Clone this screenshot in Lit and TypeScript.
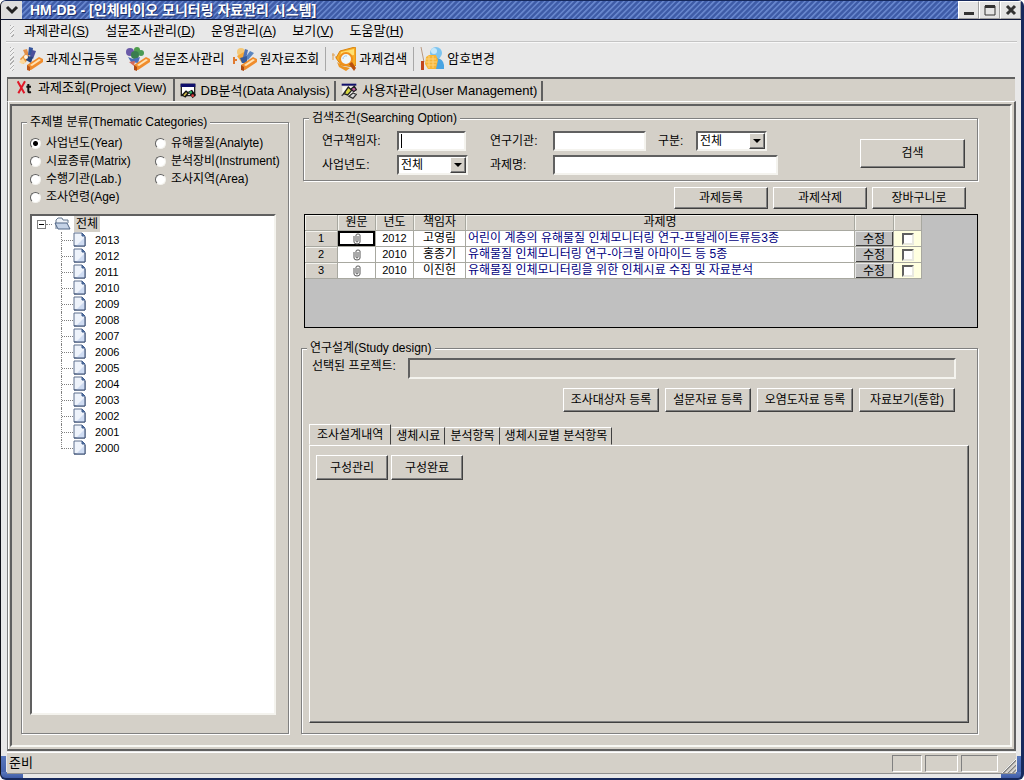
import { LitElement, html, svg, css } from "lit";
import { customElement, property, state } from "lit/decorators.js";
import { classMap } from "lit/directives/class-map.js";

const icons: Record<string, unknown> = {
  create: svg`
    <path d="M1 12 L6 7 L9 13 L4 17 Z" fill="#e9963a"/><path d="M0 15 L4 11 L7 16 L3 17 Z" fill="#fbd79b"/>
    <path d="M4 3 L8 2 L11 12 L8 12 Z" fill="#e2904a"/><path d="M10 0 L14 1 L13 9 L9 8 Z" fill="#35549c"/>
    <path d="M13 3 L17 4 L14 12 L11 10 Z" fill="#4a4f9c"/><path d="M8 9 L14 10 L12 16 L7 13 Z" fill="#27457e"/>
    <circle cx="7" cy="10" r="2" fill="#fff4e0"/>
    <path d="M8 18 L20 10 L24 12 L24 15 L12 23 L9 23 Z" fill="#f08c2c"/>
    <path d="M11 18 L20 12 L22 13 L13 19 Z" fill="#ffe2b4"/><path d="M8 18 L11 20 L11 24 L8 23 Z" fill="#c05818"/>`,
  survey: svg`
    <circle cx="11" cy="3" r="3" fill="#4f9d4c"/><circle cx="4" cy="5" r="4" fill="#6a5aa8"/>
    <circle cx="15" cy="6" r="3" fill="#4a9a55"/><circle cx="9" cy="8" r="4" fill="#3a7d4e"/>
    <path d="M2 10 L7 12 L14 10 L12 16 L5 15 Z" fill="#4c6fb8"/><path d="M3 15 L9 14 L8 19 Z" fill="#d46a5a"/>
    <path d="M8 18 L20 10 L24 12 L24 15 L12 23 L9 23 Z" fill="#f08c2c"/>
    <path d="M11 18 L20 12 L22 13 L13 19 Z" fill="#ffe2b4"/><path d="M8 18 L11 20 L11 24 L8 23 Z" fill="#b04c14"/>`,
  source: svg`
    <path d="M0 13 H4 M1 10 V17" stroke="#e07b30" stroke-width="2"/><circle cx="8" cy="5" r="4" fill="#f4c878"/>
    <path d="M4 9 L11 5 L14 12 L9 16 Z" fill="#f7a838"/><path d="M12 2 L15 3 L13 12 L10 10 Z" fill="#4e73b6"/>
    <path d="M17 4 L21 6 L15 13 L12 11 Z" fill="#5b86c0"/><path d="M7 11 L14 9 L14 16 L9 16 Z" fill="#365b9c"/>
    <path d="M8 18 L20 10 L24 12 L24 15 L12 23 L9 23 Z" fill="#f08c2c"/>
    <path d="M11 18 L20 12 L22 13 L13 19 Z" fill="#ffe2b4"/><path d="M8 18 L11 20 L11 24 L8 23 Z" fill="#b04c14"/>`,
  search: svg`
    <path d="M0 8 H3 M1 6 V13 M3 10 H5" stroke="#e0a050"/>
    <path d="M8 4 L23 0 L24 2 L24 18 L22 20 L9 18 L4 11 Z" fill="#f8ac24" stroke="#d98410"/>
    <path d="M9 5 L22 2 L22 8 L8 10 Z" fill="#ffe070"/>
    <circle cx="14" cy="12" r="6" fill="#eef6fb" stroke="#f0901c" stroke-width="2"/>
    <path d="M11 12 A3 3 0 0 1 15 9" stroke="#9cc4e4" stroke-width="1" fill="none"/>
    <path d="M17 17 L20 15 L24 21 L22 24 Z" fill="#b8500e"/><path d="M5 15 L10 19 L18 21 L14 24 L7 20 Z" fill="#ec9420"/>`,
  password: svg`
    <path d="M1 0 L4 15" stroke="#b89880"/><path d="M1 14 L4 14 L4 23 L1 23 Z" fill="#c2461c"/>
    <circle cx="16" cy="6" r="6" fill="#7cc4f0"/><path d="M8 22 Q9 11 17 11 Q25 12 24 22 Z" fill="#49a4e2"/>
    <circle cx="14" cy="4" r="3" fill="#c5e8fb"/>
    <path d="M6 10 L9 8 L16 8 L18 13 L16 22 L8 22 L5 17 Z" fill="#f7b536"/>
    <path d="M6 12 H16 M6 15 H17 M7 18 H16 M9 9 V21 M13 9 V21" stroke="#fbd27c"/>`,
  project: svg`
    <path d="M1 2 L11 20 M12 2 L2 20" stroke="#e01828" stroke-width="3"/>
    <path d="M17 6 V17 Q17 19 21 18 M14 10 H21" stroke="#111" stroke-width="3" fill="none"/>`,
  analysis: svg`
    <path d="M2 2 H22 V19 H2 Z" fill="#fff" stroke="#222" stroke-width="2"/><path d="M1 1 H23 V6 H1 Z" fill="#10106c"/>
    <path d="M2 18 L9 11 L14 15 L8 22 Z" fill="#111"/><path d="M5 18 L9 14 L11 15 L7 20 Z" fill="#ccb84c"/>
    <path d="M12 13 L18 10 L24 18 L19 23 Z" fill="#111"/><circle cx="16" cy="14" r="2" fill="#2ab060"/>
    <circle cx="19" cy="19" r="2" fill="#e04040"/>`,
  users: svg`
    <path d="M1 4 V1 H23 V4 Z" fill="#10106c"/><path d="M2 5 H22 V18 H2 Z" fill="#f6f6f0"/>
    <path d="M4 16 L11 6 L16 11 L10 18 Z" fill="#d8d840" stroke="#222" stroke-width="2"/>
    <path d="M15 9 L20 5 L23 10 L19 13 Z" fill="#c05aa0" stroke="#222" stroke-width="2"/>
    <path d="M1 19 L7 14 M12 20 L18 15 L23 17 L18 23 Z" fill="#ddd" stroke="#333" stroke-width="2"/>`,
};

const icon = (name: string) =>
  html`<svg class="icon" viewBox="0 0 24 24" aria-hidden="true">${icons[name]}</svg>`;

const sheet = svg`
  <path d="M1 1 H9 L12 4 V14 H1 Z" fill="#eef3fb" stroke="#5d6f8c"/>
  <path d="M12 5 V14 H3 Z" fill="#cfdcf2"/><path d="M9 1 V4 H12 Z" fill="#5d7cab" stroke="#3f5c8e"/>
  <path d="M12 5 V14 H1" fill="none" stroke="#34496e"/>`;

const folder = svg`
  <path d="M2 13 V4 L4 2 H8 L9 4 H14 V7" fill="#eef2f8" stroke="#66788f"/>
  <path d="M1 7 H13 L16 13 H4 Z" fill="#c4d2e6" stroke="#4f6485"/>`;

const menus = [
  ["과제관리", "S"],
  ["설문조사관리", "D"],
  ["운영관리", "A"],
  ["보기", "V"],
  ["도움말", "H"],
];

const tools = [
  { icon: "create", text: "과제신규등록" },
  { icon: "survey", text: "설문조사관리" },
  { icon: "source", text: "원자료조회" },
  { icon: "search", text: "과제검색", divided: true },
  { icon: "password", text: "암호변경", divided: true },
];

const views = [
  { icon: "project", text: "과제조회(Project View)" },
  { icon: "analysis", text: "DB분석(Data Analysis)" },
  { icon: "users", text: "사용자관리(User Management)" },
];

const categories = [
  "사업년도(Year)",
  "유해물질(Analyte)",
  "시료종류(Matrix)",
  "분석장비(Instrument)",
  "수행기관(Lab.)",
  "조사지역(Area)",
  "조사연령(Age)",
];

const years = Array.from({ length: 14 }, (_, i) => 2013 - i);

const projects = [
  { year: 2012, lead: "고영림", title: "어린이 계층의 유해물질 인체모니터링 연구-프탈레이트류등3종" },
  { year: 2010, lead: "홍종기", title: "유해물질 인체모니터링 연구-아크릴 아마이드 등 5종" },
  { year: 2010, lead: "이진헌", title: "유해물질 인체모니터링을 위한 인체시료 수집 및 자료분석" },
];

const actions = [
  { text: "조사대상자 등록" },
  { text: "설문자료 등록", short: true },
  { text: "오염도자료 등록" },
  { text: "자료보기(통합)" },
];

const designTabs = ["조사설계내역", "생체시료", "분석항목", "생체시료별 분석항목"];

const base = css`
  *,
  *::before,
  *::after {
    box-sizing: border-box;
  }
  button,
  input,
  select {
    font: inherit;
    color: inherit;
    margin: 0;
    border-radius: 0;
    outline: none;
  }
  button {
    padding: 0;
    white-space: nowrap;
  }
  fieldset {
    min-width: 0;
    margin: 0;
    border: 1px solid #808080;
    box-shadow: inset 1px 1px 0 #fff, 1px 1px 0 #fff;
  }
  legend {
    height: 16px;
    line-height: 16px;
    padding: 0 3px;
    background: #d4d0c8;
  }
  .push {
    background: #d4d0c8;
    border: 1px solid;
    border-color: #fff #404040 #404040 #fff;
    box-shadow: inset -1px -1px 0 #808080;
  }
  .field {
    height: 20px;
    padding: 0 3px;
    background: #fff;
    border: 2px solid;
    border-color: #606060 #f4f3ee #f4f3ee #606060;
  }
`;

@customElement("category-panel")
export class CategoryPanel extends LitElement {
  @state() private selected = 0;

  static styles = [
    base,
    css`
      :host {
        display: flex;
      }
      .group {
        flex: 1;
        display: flex;
        flex-direction: column;
        padding: 4px 12px 18px 8px;
      }
      .legend {
        margin-left: -3px;
      }
      .options {
        display: grid;
        grid-template-columns: 125px 1fr;
        grid-auto-rows: 18px;
      }
      .option {
        display: flex;
        align-items: center;
        gap: 5px;
        white-space: nowrap;
      }
      .radio {
        appearance: none;
        flex: none;
        width: 11px;
        height: 11px;
        border: 1px solid;
        border-color: #606060 #f4f3ee #f4f3ee #606060;
        border-radius: 50%;
        background: #fff;
      }
      .radio:checked {
        background: radial-gradient(circle, #000 2px, #fff 3px);
      }
      .tree {
        flex: 1;
        margin: 8px 0 0;
        padding: 0 0 0 5px;
        list-style: none;
        background: #fff;
        border: 2px solid;
        border-color: #606060 #f4f3ee #f4f3ee #606060;
      }
      .node {
        display: flex;
        align-items: center;
        height: 16px;
      }
      .toggle {
        width: 9px;
        height: 9px;
        border: 1px solid #808080;
        background: linear-gradient(#000, #000) center / 5px 1px no-repeat #fff;
      }
      .dash {
        width: 6px;
        border-top: 1px dotted #808080;
      }
      .folder {
        width: 18px;
        height: 16px;
        margin: 0 2px;
      }
      .root-name {
        padding: 0 2px;
        line-height: 16px;
        background: #d4d0c8;
      }
      .years {
        margin: 0;
        padding: 0 0 0 24px;
        list-style: none;
      }
      .year {
        display: flex;
        align-items: center;
        height: 16px;
        font-size: 11px;
      }
      .branch {
        align-self: stretch;
        width: 12px;
        border-left: 1px dotted #808080;
        background: repeating-linear-gradient(90deg, #808080 0 1px, #fff 1px 2px) 0 8px / 12px 1px no-repeat;
      }
      .year:last-child .branch {
        height: 9px;
        align-self: flex-start;
      }
      .sheet {
        width: 14px;
        height: 16px;
        margin-right: 8px;
      }
    `,
  ];

  render() {
    return html`<fieldset class="group">
      <legend class="legend">주제별 분류(Thematic Categories)</legend>
      <div class="options">
        ${categories.map(
          (name, i) => html`<label class="option"
            ><input
              class="radio"
              type="radio"
              name="category"
              .checked=${i === this.selected}
              @change=${() => (this.selected = i)}
            />${name}</label
          >`
        )}
      </div>
      <ul class="tree">
        <li>
          <div class="node">
            <span class="toggle"></span><span class="dash"></span>
            <svg class="folder" viewBox="0 0 18 16" aria-hidden="true">${folder}</svg>
            <span class="root-name">전체</span>
          </div>
          <ul class="years">
            ${years.map(
              (year) => html`<li class="year">
                <span class="branch"></span>
                <svg class="sheet" viewBox="0 0 14 16" aria-hidden="true">${sheet}</svg>${year}
              </li>`
            )}
          </ul>
        </li>
      </ul>
    </fieldset>`;
  }
}

@customElement("search-panel")
export class SearchPanel extends LitElement {
  static styles = [
    base,
    css`
      :host {
        display: block;
      }
      .group {
        display: flex;
        align-items: center;
        justify-content: space-between;
        padding: 5px 12px 5px 18px;
      }
      .legend {
        margin-left: -13px;
      }
      .form {
        display: grid;
        grid-template-columns: 75px 93px 63px 105px 38px 81px;
        grid-auto-rows: 20px;
        row-gap: 4px;
        align-items: center;
      }
      .lead {
        width: 69px;
        background: linear-gradient(#000, #000) 2px 1px / 1px 14px no-repeat #fff;
      }
      .lab {
        width: 93px;
      }
      .title {
        grid-column: span 3;
        width: 225px;
      }
      .choice {
        display: grid;
        width: 71px;
        align-items: center;
      }
      .select {
        grid-area: 1 / 1;
        appearance: none;
        width: 100%;
        padding: 0 2px;
        line-height: 16px;
      }
      .arrow {
        grid-area: 1 / 1;
        justify-self: end;
        display: grid;
        place-items: center;
        width: 16px;
        height: 16px;
        margin-right: 2px;
        pointer-events: none;
      }
      .arrow::after {
        content: "";
        border: 4px solid transparent;
        border-top-color: #000;
        border-bottom: 0;
      }
      .submit {
        width: 105px;
        height: 29px;
      }
    `,
  ];

  private choice(id: string) {
    return html`<span class="choice"
      ><select class="field select" id=${id}>
        <option>전체</option></select
      ><span class="push arrow"></span
    ></span>`;
  }

  render() {
    return html`<fieldset class="group">
      <legend class="legend">검색조건(Searching Option)</legend>
      <div class="form">
        <label for="lead">연구책임자:</label><input class="field lead" id="lead" />
        <label for="lab">연구기관:</label><input class="field lab" id="lab" />
        <label for="kind">구분:</label>${this.choice("kind")}
        <label for="year">사업년도:</label>${this.choice("year")}
        <label for="title">과제명:</label><input class="field title" id="title" />
      </div>
      <button class="push submit">검색</button>
    </fieldset>`;
  }
}

@customElement("project-grid")
export class ProjectGrid extends LitElement {
  static styles = [
    base,
    css`
      :host {
        display: block;
        height: 114px;
        overflow: hidden;
        background: #c0c0c0;
        border: 1px solid #000;
      }
      .table {
        border-collapse: separate;
        border-spacing: 0;
        table-layout: fixed;
        width: 617px;
        line-height: 15px;
      }
      .number {
        width: 33px;
      }
      .file {
        width: 38px;
      }
      .year {
        width: 38px;
      }
      .lead {
        width: 52px;
      }
      .edit {
        width: 39px;
      }
      .pick {
        width: 28px;
      }
      th,
      td {
        height: 16px;
        padding: 0;
        text-align: center;
        font-weight: 400;
        white-space: nowrap;
        overflow: hidden;
        border-right: 1px solid #a8a8a0;
        border-bottom: 1px solid #a8a8a0;
      }
      th {
        background: #d4d0c8;
        box-shadow: inset 1px 1px 0 #f4f3ee;
      }
      td {
        background: #fff;
      }
      tbody th,
      .when {
        font-size: 11px;
      }
      .current {
        box-shadow: inset 0 0 0 2px #000;
      }
      .clip {
        display: block;
        width: 8px;
        height: 12px;
        margin: 0 auto;
      }
      .name {
        padding-left: 2px;
        text-align: left;
        color: #000080;
      }
      .action {
        background: #c0c0c0;
      }
      .modify {
        display: block;
        width: 100%;
        height: 15px;
        line-height: 14px;
        background: #c0c0c0;
        border: 0;
        box-shadow: inset 1px 1px 0 #e8e8e8, inset -1px -1px 0 #404040;
      }
      .mark {
        background: #ffffe0;
      }
      .tick {
        appearance: none;
        display: block;
        width: 12px;
        height: 12px;
        margin: 0 auto;
        background: #fff;
        border: 2px solid;
        border-color: #606060 #e8e8e0 #e8e8e0 #606060;
      }
      .tick:checked {
        background: #404040;
      }
    `,
  ];

  render() {
    return html`<table class="table">
      <colgroup>
        <col class="number" />
        <col class="file" />
        <col class="year" />
        <col class="lead" />
        <col />
        <col class="edit" />
        <col class="pick" />
      </colgroup>
      <thead>
        <tr>
          <th></th>
          <th>원문</th>
          <th>년도</th>
          <th>책임자</th>
          <th>과제명</th>
          <th></th>
          <th></th>
        </tr>
      </thead>
      <tbody>
        ${projects.map(
          (p, i) => html`<tr>
            <th>${i + 1}</th>
            <td class=${classMap({ current: i === 0 })}>
              <svg class="clip" viewBox="0 0 8 12" aria-hidden="true">
                <path
                  d="M1 3 V9 Q1 11 4 11 Q7 11 7 9 V2 Q7 1 5 1 Q3 1 3 2 V8 Q3 9 4 9 Q5 9 5 8 V3"
                  fill="none"
                  stroke="#555"
                />
              </svg>
            </td>
            <td class="when">${p.year}</td>
            <td>${p.lead}</td>
            <td class="name">${p.title}</td>
            <td class="action"><button class="modify">수정</button></td>
            <td class="mark"><input class="tick" type="checkbox" aria-label=${p.title} /></td>
          </tr>`
        )}
      </tbody>
    </table>`;
  }
}

@customElement("study-panel")
export class StudyPanel extends LitElement {
  @state() private tab = 0;

  static styles = [
    base,
    css`
      :host {
        display: flex;
      }
      .group {
        flex: 1;
        display: flex;
        flex-direction: column;
        padding: 2px 8px 10px 7px;
      }
      .legend {
        margin-left: -2px;
      }
      .chosen {
        display: flex;
        justify-content: space-between;
        margin: 0 13px 0 3px;
      }
      .chosen-label {
        flex: none;
        width: 96px;
        line-height: 16px;
      }
      .target {
        flex: 1;
        min-width: 0;
        height: 21px;
        background: #d4d0c8;
      }
      .actions {
        display: flex;
        justify-content: flex-end;
        gap: 6px;
        margin: 9px 14px 0 0;
      }
      .action {
        width: 96px;
        height: 24px;
      }
      .action.short {
        width: 86px;
      }
      .tabs {
        display: flex;
        align-items: flex-end;
        height: 21px;
        margin-top: 12px;
      }
      .tab {
        height: 18px;
        padding: 0 4px;
        background: none;
        border: 1px solid;
        border-color: #fff #404040 transparent transparent;
      }
      .tab.on {
        height: 21px;
        padding: 0 7px;
        border-color: #fff #404040 transparent #fff;
      }
      .sheet {
        flex: 1;
        display: flex;
        align-items: flex-start;
        gap: 3px;
        padding: 9px 6px;
        border: 1px solid;
        border-color: #fff #404040 #404040 #fff;
        box-shadow: inset -1px -1px 0 #808080;
      }
      .step {
        width: 72px;
        height: 25px;
      }
    `,
  ];

  render() {
    return html`<fieldset class="group">
      <legend class="legend">연구설계(Study design)</legend>
      <div class="chosen">
        <label class="chosen-label" for="target">선택된 프로젝트:</label>
        <input class="field target" id="target" readonly />
      </div>
      <div class="actions">
        ${actions.map(
          (a) =>
            html`<button class=${classMap({ push: true, action: true, short: !!a.short })}>${a.text}</button>`
        )}
      </div>
      <div class="tabs" role="tablist">
        ${designTabs.map(
          (t, i) => html`<button
            class=${classMap({ tab: true, on: i === this.tab })}
            role="tab"
            aria-selected=${i === this.tab}
            @click=${() => (this.tab = i)}
          >
            ${t}
          </button>`
        )}
      </div>
      <div class="sheet" role="tabpanel">
        <button class="push step">구성관리</button>
        <button class="push step">구성완료</button>
      </div>
    </fieldset>`;
  }
}

@customElement("app-root")
export class AppRoot extends LitElement {
  @property({ type: Number }) view = 0;

  static styles = [
    base,
    css`
      :host {
        display: flex;
        flex-direction: column;
        min-height: 100vh;
        box-sizing: border-box;
        border: solid #16295c;
        border-width: 1px 3px 2px 1px;
        border-left-color: #101018;
        border-radius: 6px;
        background: linear-gradient(#5877bc, #3e5ba6) left bottom / 22px 6px no-repeat,
          linear-gradient(#5877bc, #3e5ba6) left bottom / 5px 22px no-repeat,
          linear-gradient(#5877bc, #3e5ba6) right bottom / 20px 6px no-repeat,
          linear-gradient(#5877bc, #3e5ba6) right bottom / 4px 22px no-repeat, #e8e8e8;
        color: #000;
        font: 12px/16px "Liberation Sans", "Noto Sans CJK KR", sans-serif;
      }
      .title-bar {
        display: flex;
        align-items: center;
        height: 19px;
        border-bottom: 1px solid #101838;
        border-radius: 5px 5px 0 0;
        background: repeating-linear-gradient(135deg, #6685cc 0 1px, #3e5ba6 2px 3px, #4a69b6 4px);
      }
      .system {
        display: grid;
        place-items: center;
        width: 21px;
        height: 18px;
        background: #dedede;
        border: 0;
        border-radius: 5px 0 0 0;
      }
      .glyph {
        width: 14px;
        height: 14px;
      }
      .title {
        flex: 1;
        margin: 0;
        padding-left: 8px;
        font-size: 14px;
        line-height: 16px;
        font-weight: 700;
        color: #fff;
        white-space: nowrap;
        text-shadow: 1px 1px 0 #1c2f6a;
      }
      .control {
        display: grid;
        place-items: center;
        width: 21px;
        height: 18px;
        background: #e4e4e4;
        border: 1px solid;
        border-color: #fff #a0a0a0 #a0a0a0 #fff;
      }
      .bar {
        display: flex;
        align-items: center;
        margin: 0 4px 0 5px;
        padding-left: 4px;
        font-size: 13px;
      }
      .menu-bar {
        height: 22px;
        gap: 16px;
        border-bottom: 1px solid #c4c4c4;
      }
      .tool-bar {
        height: 35px;
        padding-bottom: 2px;
        border-top: 1px solid #f8f8f8;
      }
      .grip {
        width: 4px;
        height: 12px;
        margin-right: -6px;
        background: repeating-linear-gradient(135deg, #b0b0b0 0 1px, #f0f0f0 1px 3px);
      }
      .tool-bar .grip {
        height: 24px;
        margin-right: 5px;
      }
      .menu,
      .tool {
        background: none;
        border: 0;
      }
      .tool {
        display: flex;
        align-items: center;
        gap: 3px;
        margin-right: 8px;
      }
      .divider {
        width: 1px;
        height: 24px;
        margin: 0 6px 0 -2px;
        background: #a8a8a8;
      }
      .icon {
        width: 24px;
        height: 24px;
      }
      .views {
        display: flex;
        align-items: flex-end;
        height: 24px;
        margin: 0 6px;
        padding-left: 3px;
        background: #d4d0c8;
        border-top: 2px solid #606060;
        border-left: 1px solid #606060;
      }
      .view {
        display: flex;
        align-items: center;
        gap: 5px;
        height: 20px;
        padding: 0 4px 0 5px;
        background: none;
        border: 0;
        border-right: 2px solid #606060;
        font-size: 13px;
      }
      .view.on {
        height: 22px;
        padding: 0 6px 4px;
      }
      .view .icon {
        width: 16px;
        height: 16px;
      }
      .frame {
        flex: 1;
        display: flex;
        margin: 0 5px 0 6px;
        padding: 2px;
        background: #d4d0c8;
        border: solid;
        border-width: 1px 2px 2px 1px;
        border-color: #fff #606060 #606060 #808080;
        box-shadow: inset 1px 0 0 #fff;
      }
      .page {
        flex: 1;
        display: flex;
        gap: 12px;
        min-width: 0;
        padding: 4px 32px 11px 9px;
        border: 2px solid;
        border-color: #606060 #f8f8f4 #f8f8f4 #606060;
      }
      .side {
        flex: none;
        width: 268px;
        margin-top: 4px;
      }
      .main {
        flex: 1;
        display: flex;
        flex-direction: column;
        min-width: 0;
      }
      .search {
        margin-left: 2px;
      }
      .projects {
        margin-left: 3px;
      }
      .commands {
        display: flex;
        justify-content: flex-end;
        gap: 5px;
        margin: 6px 12px 5px 0;
      }
      .command {
        width: 94px;
        height: 22px;
      }
      .study {
        flex: 1;
        margin-top: 12px;
      }
      .status {
        display: flex;
        align-items: center;
        gap: 3px;
        height: 22px;
        margin: 1px 5px 4px 6px;
        padding-left: 2px;
        background: #d4d0c8;
        border-top: 1px solid #fff;
        border-bottom: 1px solid #909090;
        font-size: 13px;
      }
      .message {
        flex: 1;
      }
      .cell {
        width: 30px;
        height: 17px;
        border: 1px solid;
        border-color: #808080 #fff #fff #808080;
      }
      .cell.mid {
        width: 33px;
      }
      .cell.wide {
        width: 37px;
      }
      .sizer {
        width: 15px;
        height: 15px;
        align-self: flex-end;
      }
    `,
  ];

  render() {
    return html`
      <header class="title-bar">
        <button class="system" aria-label="시스템 메뉴">
          <svg class="glyph" viewBox="0 0 14 14"><path d="M2 4 L7 9 L12 4" fill="none" stroke="#222" stroke-width="3" /></svg>
        </button>
        <h1 class="title">HM-DB - [인체바이오 모니터링 자료관리 시스템]</h1>
        <button class="control" aria-label="최소화">
          <svg class="glyph" viewBox="0 0 14 14"><path d="M2 9 H12 V12 H2 Z" fill="#333" /></svg>
        </button>
        <button class="control" aria-label="최대화">
          <svg class="glyph" viewBox="0 0 14 14">
            <path d="M2 3 H12 V12 H2 Z" fill="none" stroke="#333" /><path d="M2 2 H12 V5 H2 Z" fill="#333" />
          </svg>
        </button>
        <button class="control" aria-label="닫기">
          <svg class="glyph" viewBox="0 0 14 14"><path d="M3 3 L11 11 M11 3 L3 11" stroke="#333" stroke-width="3" /></svg>
        </button>
      </header>
      <nav class="bar menu-bar">
        <span class="grip"></span>
        ${menus.map(([name, key]) => html`<button class="menu">${name}(<u>${key}</u>)</button>`)}
      </nav>
      <div class="bar tool-bar">
        <span class="grip"></span>
        ${tools.map(
          (t) => html`${t.divided ? html`<span class="divider"></span>` : ""}<button class="tool">
              ${icon(t.icon)}${t.text}
            </button>`
        )}
      </div>
      <div class="views" role="tablist">
        ${views.map(
          (v, i) => html`<button
            class=${classMap({ view: true, on: i === this.view })}
            role="tab"
            aria-selected=${i === this.view}
            @click=${() => (this.view = i)}
          >
            ${icon(v.icon)}${v.text}
          </button>`
        )}
      </div>
      <main class="frame">
        <div class="page">
          <category-panel class="side"></category-panel>
          <div class="main">
            <search-panel class="search"></search-panel>
            <div class="commands">
              ${["과제등록", "과제삭제", "장바구니로"].map(
                (t) => html`<button class="push command">${t}</button>`
              )}
            </div>
            <project-grid class="projects"></project-grid>
            <study-panel class="study"></study-panel>
          </div>
        </div>
      </main>
      <footer class="status">
        <span class="message">준비</span>
        <span class="cell"></span><span class="cell mid"></span><span class="cell wide"></span>
        <svg class="sizer" viewBox="0 0 16 16" aria-hidden="true">
          <path d="M2 16 L16 2 M7 16 L16 7 M12 16 L16 12" stroke="#808080" stroke-width="2" />
          <path d="M1 16 L16 1 M6 16 L16 6 M11 16 L16 11" stroke="#fff" />
        </svg>
      </footer>
    `;
  }
}
